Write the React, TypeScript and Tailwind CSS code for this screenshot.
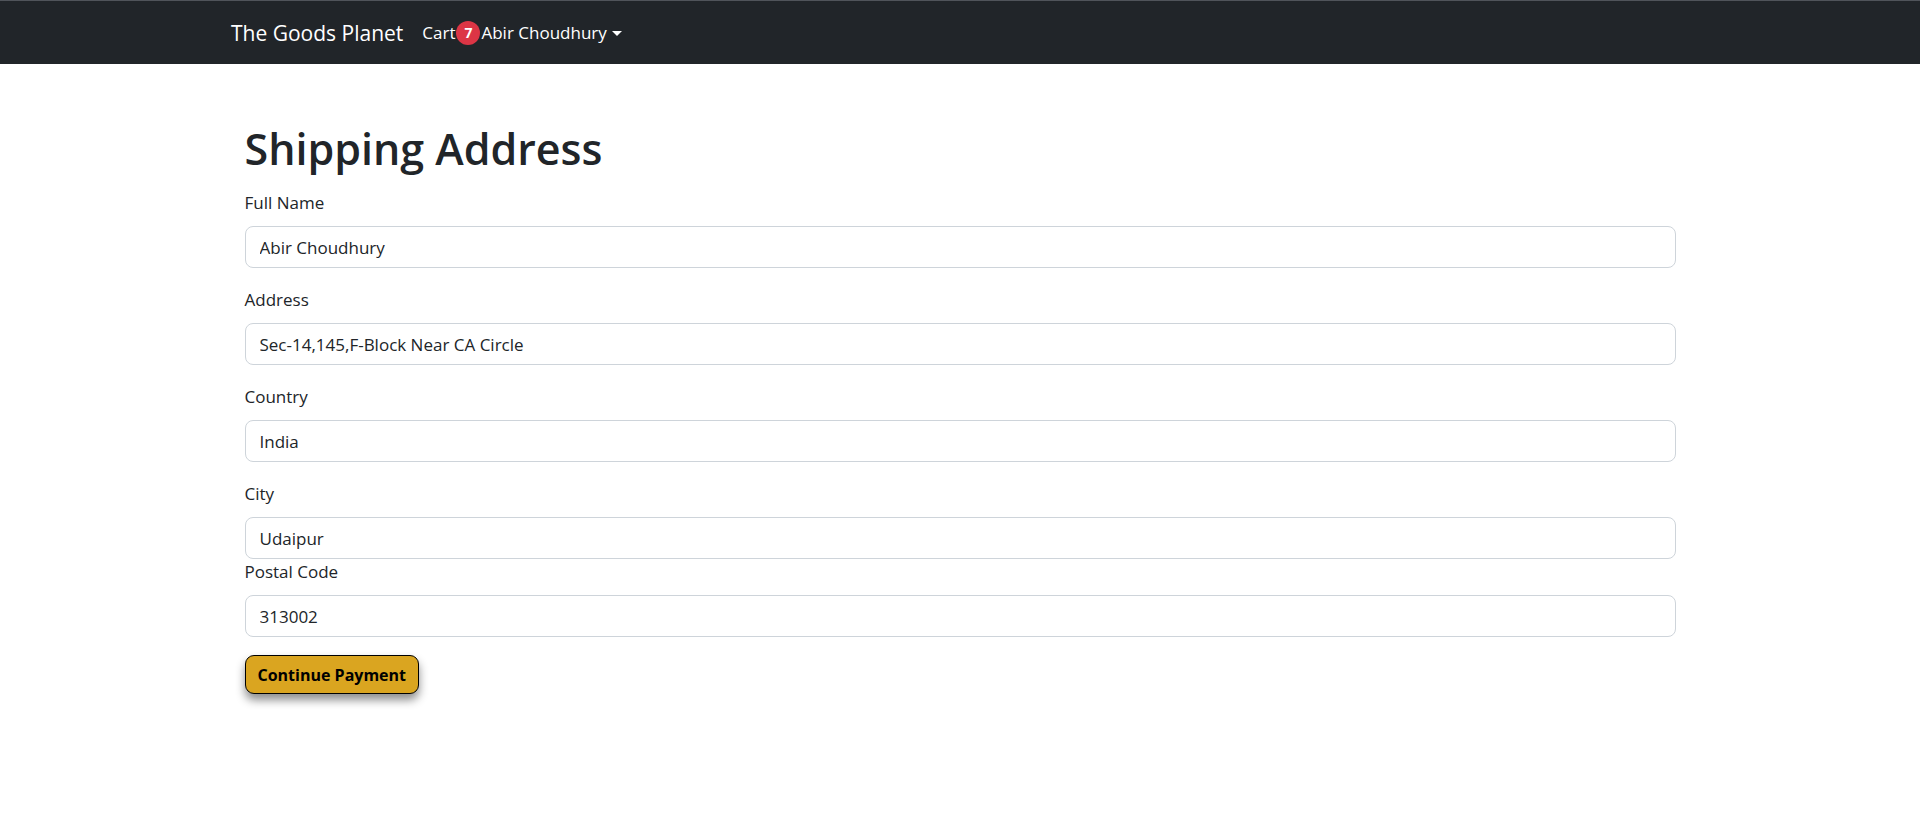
const fields = [
  { label: 'Full Name', value: 'Abir Choudhury', gap: true },
  { label: 'Address', value: 'Sec-14,145,F-Block Near CA Circle', gap: true },
  { label: 'Country', value: 'India', gap: true },
  { label: 'City', value: 'Udaipur', gap: false },
  { label: 'Postal Code', value: '313002', gap: false },
];

function Navbar() {
  return (
    <nav className="h-[64px] border-t border-[#50545a] bg-[#212529]">
      <div className="mx-auto flex h-full w-[1458px] items-center">
        <a href="#" className="text-[21px] leading-[30px] text-white">
          The Goods Planet
        </a>
        <div className="ml-[19px] flex items-center text-[17px] leading-[24px] text-white">
          <a href="#">Cart</a>
          <span className="mx-[1px] flex h-[24px] w-[24px] items-center justify-center rounded-full bg-[#dc3545] text-[14px] font-bold leading-none text-white">
            7
          </span>
          <a href="#" className="flex items-center">
            Abir Choudhury
            <span className="ml-[5px] mt-[1px] h-0 w-0 border-x-[5px] border-t-[5px] border-x-transparent border-t-white" />
          </a>
        </div>
      </div>
    </nav>
  );
}

export default function App() {
  return (
    <div className="min-h-screen bg-white font-['Segoe_UI','Open_Sans',sans-serif] text-[#212529]">
      <Navbar />
      <main className="mx-auto w-[1431px] pt-[58px]">
        <h1 className="mb-[15px] text-[43px] font-semibold leading-[53px]">Shipping Address</h1>
        <form>
          {fields.map((f) => (
            <div key={f.label} className={f.gap ? 'mb-[19px]' : ''}>
              <label className="mb-[10px] block text-[17px] leading-[26px]">{f.label}</label>
              <input
                defaultValue={f.value}
                className="block h-[42px] w-full rounded-[8px] border border-[#ced4da] px-[14px] text-[17px] text-[#212529] outline-none"
              />
            </div>
          ))}
          <button
            type="button"
            className="mt-[18px] h-[39px] rounded-[9px] border border-black bg-[#daa520] px-[12px] text-[16px] font-bold text-black shadow-[0_6px_10px_rgba(0,0,0,0.45)]"
          >
            Continue Payment
          </button>
        </form>
      </main>
    </div>
  );
}
